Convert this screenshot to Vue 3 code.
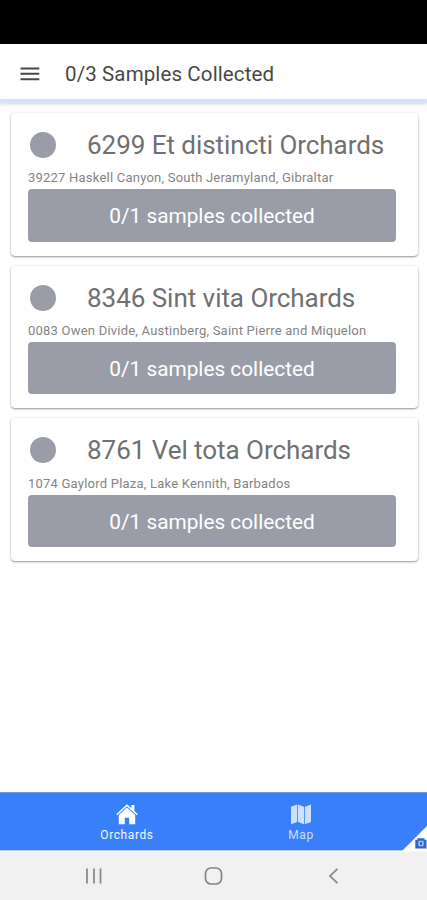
<script setup>
const orchards = [
  { name: '6299 Et distincti Orchards', address: '39227 Haskell Canyon, South Jeramyland, Gibraltar' },
  { name: '8346 Sint vita Orchards', address: '0083 Owen Divide, Austinberg, Saint Pierre and Miquelon' },
  { name: '8761 Vel tota Orchards', address: '1074 Gaylord Plaza, Lake Kennith, Barbados' },
]
</script>

<template>
  <div class="screen">
    <div class="status"></div>
    <header class="toolbar">
      <svg class="menu" width="20" height="14" viewBox="0 0 20 14"><path d="M.5 1.500H19.300M.5 6.800H19.300M.5 12.200H19.300" stroke="#484848" stroke-width="1.900" /></svg>
      <h1>0/3 Samples Collected</h1>
    </header>
    <main class="list">
      <article v-for="o in orchards" :key="o.name" class="card">
        <div class="heading">
          <span class="dot"></span>
          <h2>{{ o.name }}</h2>
        </div>
        <p>{{ o.address }}</p>
        <button>0/1 samples collected</button>
      </article>
    </main>
    <nav class="tabs">
      <a class="tab">
        <svg width="22" height="21" viewBox="0 0 22 21" fill="#fff"><path d="M11 .3 .2 10.200l1 1L11 2.300l9.800 8.900 1-1-3.400-3.100V1h-3v3.300z" /><path d="M11 3.600 2.800 11v9.200h6V13.700h4.400v6.500h6V11z" /></svg>
        <span class="label">Orchards</span>
      </a>
      <a class="tab dim">
        <svg width="22" height="21" viewBox="0 0 22 21" fill="#cfdfff"><path d="M1 2.800 7.200 .6V18L1 20.200zM8 .6l6 2.200v17.400L8 18zM14.800 2.800 21 .6V18l-6.200 2.200z" /></svg>
        <span class="label">Map</span>
      </a>
      <svg class="corner" width="25" height="25" viewBox="0 0 25 25"><path d="M25 0V25H0z" fill="#fff" /><path d="M15.500 13.800V12.300h7v1.500H24.500V22.500H13.300V13.800z" fill="#2e67c9" /><rect x="16.300" y="14.800" width="5.400" height="5.500" rx="1" fill="#9fbdf2" /><path d="M18 16h2v3h-2z" fill="#2e67c9" /></svg>
    </nav>
    <footer class="system">
      <svg width="18" height="18" viewBox="0 0 18 18"><path d="M2 1.500V16.500M9 1.500V16.500M15.500 1.500V16.500" stroke="#858585" stroke-width="1.700" /></svg>
      <svg width="20" height="20" viewBox="0 0 20 20"><rect x="1.500" y="2" width="16" height="16" rx="5.500" fill="none" stroke="#858585" stroke-width="1.700" /></svg>
      <svg width="18" height="18" viewBox="0 0 18 18"><path d="M13.500 1.800 6 9l7.500 7.200" fill="none" stroke="#858585" stroke-width="1.700" /></svg>
    </footer>
  </div>
</template>

<style>
body { margin: 0; }
</style>

<style scoped>
.screen { width: 427px; height: 900px; display: flex; flex-direction: column; overflow: hidden; background: #fefefe; font-family: Roboto, sans-serif; }
.status { height: 44px; background: #000; flex: none; }
.toolbar { height: 55px; flex: none; display: flex; align-items: center; gap: 25px; padding: 4px 0 0 20px; box-sizing: border-box; background: #fff; box-shadow: 0 4px 0 #d8e3fa, 0 5px 2px #dcd9df, 0 8px 3px #f6f5f7; }
h1, h2, p { margin: 0; font-weight: 400; white-space: nowrap; }
h1 { font-size: 20.500px; line-height: 24px; color: #484848; letter-spacing: .12px; }
.list { flex: 1; padding: 14px 9px 0 11px; display: flex; flex-direction: column; gap: 10px; }
.card { height: 142.700px; box-sizing: border-box; padding: 14px 22px 0 17px; border-radius: 4px; background: #fff; box-shadow: 0 1px 2px rgba(0,0,0,.4), 0 0 3px rgba(0,0,0,.06); }
.heading { display: flex; align-items: center; height: 36px; gap: 31px; padding-left: 2px; }
.dot { width: 26px; height: 26px; flex: none; border-radius: 50%; background: #9a9da7; }
h2 { font-size: 26px; line-height: 36px; color: #707070; letter-spacing: -.04px; }
p { font-size: 13px; line-height: 16px; height: 26.200px; padding-top: 7.300px; box-sizing: border-box; color: #848484; letter-spacing: .22px; }
button { display: block; width: 100%; height: 52.400px; border: 0; border-radius: 4px; padding: 2px 0 0; background: #9a9da7; color: #fff; font: 400 20.800px Roboto, sans-serif; }
.tabs { position: relative; height: 59px; flex: none; display: flex; justify-content: center; background: #387ffc; border-top: 1px solid #7099e8; border-bottom: 1px solid #b9cdf3; box-sizing: border-box; }
.tab { width: 174px; display: flex; flex-direction: column; align-items: center; padding-top: 11px; color: #f4f8ff; }
.dim { color: #cfdfff; }
.label { font-size: 12px; line-height: 14px; letter-spacing: .6px; margin-top: 3px; padding-left: 1px; }
.corner { position: absolute; right: 0; bottom: -1px; }
.system { height: 49px; flex: none; display: flex; align-items: center; justify-content: space-between; padding: 0 85px 1px; box-sizing: border-box; background: #f1f1f1; border-top: 1px solid #fafafa; }
</style>
